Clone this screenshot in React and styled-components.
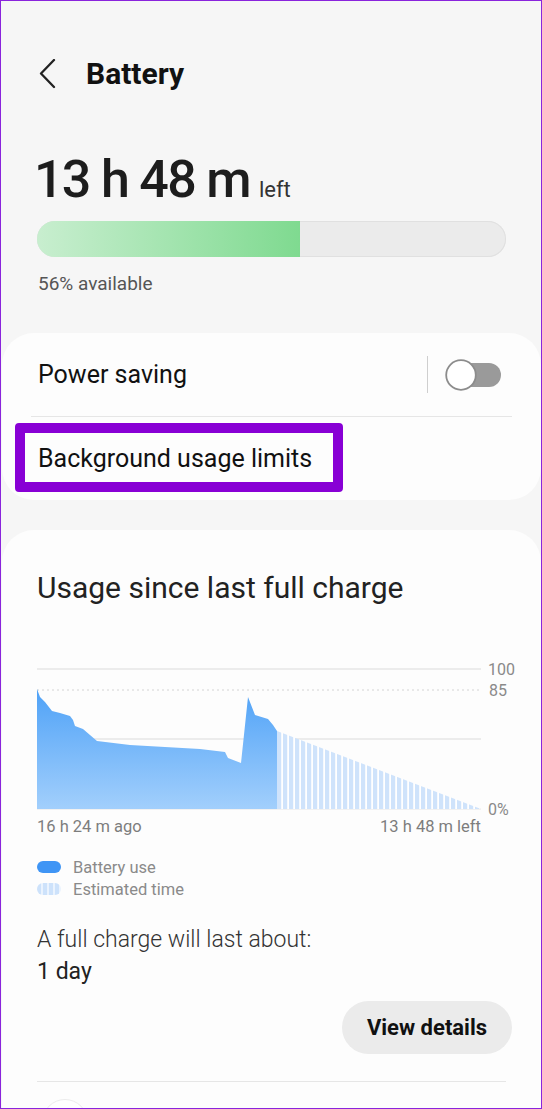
import React from 'react';
import styled, { createGlobalStyle } from 'styled-components';

const GlobalStyle = createGlobalStyle`
  html, body { margin: 0; padding: 0; background: #f6f6f6; }
  body { font-family: Roboto, "Noto Sans", Arial, sans-serif; color: #111; }
  * { box-sizing: border-box; }
`;

const Frame = styled.div`
  width: 542px;
  height: 1109px;
  overflow: hidden;
  border: 1px solid #8a24dc;
  background: #f6f6f6;
  padding-top: 55px;
`;

const Header = styled.header`
  height: 36px;
  padding-left: 36px;
  display: flex;
  align-items: center;
  gap: 27px;
`;

const Title = styled.h1`
  margin: 0;
  font-size: 30px;
  line-height: 36px;
  font-weight: 700;
  color: #111;
`;

const TimeRow = styled.div`
  margin-top: 62px;
  padding-left: 33px;
  display: flex;
  align-items: baseline;
`;

const BigTime = styled.span`
  font-size: 52px;
  line-height: 52px;
  font-weight: 500;
  letter-spacing: -1.7px;
  color: #1d1d1d;
`;

const LeftLabel = styled.span`
  margin-left: 9px;
  font-size: 22px;
  color: #333;
`;

const Bar = styled.div`
  margin: 15px 35px 0 36px;
  height: 36px;
  border-radius: 18px;
  background: #ebebeb;
  box-shadow: inset 0 0 0 1px #e0e0e0;
  overflow: hidden;
`;

const BarFill = styled.div`
  height: 100%;
  background: linear-gradient(90deg, #c8eecf 0%, #7fda90 100%);
`;

const Available = styled.div`
  margin-top: 15px;
  padding-left: 37px;
  font-size: 19px;
  line-height: 24px;
  color: #555;
`;

const Card = styled.section`
  margin: ${p => p.$top}px 0 0 1px;
  background: #fdfdfd;
  border-radius: ${p => (p.$open ? '32px 32px 0 0' : '32px')};
  ${p => p.$open && 'min-height: 620px;'}
  padding: ${p => p.$pad || '0'};
`;

const Row = styled.div`
  position: relative;
  height: 83px;
  padding: 0 39px 0 36px;
  display: flex;
  align-items: center;
  justify-content: space-between;
  font-size: 25px;
  line-height: 30px;
  color: #111;
`;

const Divider = styled.div`
  height: 1px;
  background: #e6e6e6;
  margin: ${p => p.$margin || '0 29px'};
`;

const SwitchGroup = styled.div`
  display: flex;
  align-items: center;
  gap: 17px;
`;

const VLine = styled.div`
  width: 1px;
  height: 37px;
  background: #cfcfcf;
`;

const Highlight = styled.div`
  position: absolute;
  left: 13px;
  top: 6px;
  width: 328px;
  height: 69px;
  border: 10px solid #8800d5;
  border-radius: 4px;
  pointer-events: none;
`;

const SectionTitle = styled.h2`
  margin: 0;
  font-size: 30px;
  line-height: 36px;
  font-weight: 400;
  color: #222;
`;

const ChartSvg = styled.svg`
  display: block;
  margin-top: 54px;
  overflow: visible;
`;

const AxisRow = styled.div`
  width: 444px;
  display: flex;
  justify-content: space-between;
  font-size: 16.5px;
  line-height: 20px;
  color: #7d7d7d;
`;

const Legend = styled.div`
  margin-top: 19px;
  display: flex;
  flex-direction: column;
`;

const LegendItem = styled.div`
  display: flex;
  align-items: center;
  gap: 12px;
  height: 22px;
  font-size: 16.5px;
  color: #8a8a8a;
`;

const Pill = styled.span`
  width: 24px;
  height: 12px;
  border-radius: 6px;
  background: ${p =>
    p.$striped
      ? 'repeating-linear-gradient(90deg, #cde2fb 0 4px, #eaf3fe 4px 6px)'
      : '#3f95f5'};
`;

const Summary = styled.div`
  margin-top: 25px;
  font-size: 23px;
  line-height: 30px;
  font-weight: 300;
  color: #333;
`;

const Days = styled.div`
  margin-top: 2px;
  font-size: 23px;
  line-height: 30px;
  color: #222;
`;

const ButtonRow = styled.div`
  margin-top: 14px;
  display: flex;
  justify-content: flex-end;
`;

const PillButton = styled.button`
  width: 170px;
  height: 53px;
  border: none;
  border-radius: 27px;
  background: #ebebeb;
  font-family: Roboto, "Noto Sans", Arial, sans-serif;
  font-size: 22px;
  font-weight: 700;
  color: #111;
`;

const RowIcon = styled.div`
  margin: 17px 0 0 5px;
  width: 46px;
  height: 46px;
  border-radius: 50%;
  background: #fff;
  border: 1.5px solid #ececec;
`;

const BackIcon = () => (
  <svg width="22" height="30" viewBox="0 0 22 30">
    <polyline points="17,1 4,14.5 17,28" fill="none" stroke="#222" strokeWidth="2.3" strokeLinecap="round" strokeLinejoin="round" />
  </svg>
);

const Switch = () => (
  <svg width="57" height="32" viewBox="0 0 57 32">
    <rect x="15" y="4" width="41" height="24" rx="12" fill="#9a9a9a" />
    <circle cx="16" cy="16" r="14.8" fill="#fff" stroke="#8c8c8c" strokeWidth="1.8" />
  </svg>
);

const usage = [
  [0, 29], [3, 37], [8, 42], [15, 51], [23, 53], [33, 56], [36, 60], [38, 66], [46, 69],
  [53, 75], [60, 81], [93, 85], [163, 89], [188, 92], [191, 98], [204, 103], [211, 37],
  [218, 55], [231, 59], [236, 65], [240, 71], [240, 149], [0, 149],
];

const Chart = () => (
  <ChartSvg width="474" height="157" viewBox="0 0 474 157">
    <defs>
      <linearGradient id="useFill" x1="0" y1="0" x2="0" y2="1">
        <stop offset="0" stopColor="#4fa2f7" />
        <stop offset="1" stopColor="#a2cffc" />
      </linearGradient>
      <pattern id="estFill" width="6" height="10" patternUnits="userSpaceOnUse">
        <rect width="6" height="10" fill="#ffffff" />
        <rect width="4.2" height="10" fill="#cfe3fb" />
      </pattern>
    </defs>
    <line x1="0" y1="9" x2="444" y2="9" stroke="#e6e6e6" strokeWidth="1.5" />
    <line x1="0" y1="30" x2="444" y2="30" stroke="#d4d4d4" strokeWidth="1" strokeDasharray="2 3" />
    <line x1="0" y1="79" x2="444" y2="79" stroke="#e6e6e6" strokeWidth="1.5" />
    <line x1="0" y1="149" x2="444" y2="149" stroke="#e6e6e6" strokeWidth="1" />
    <polygon points="240,71 444,149 240,149" fill="url(#estFill)" />
    <polygon points={usage.map(p => p.join(',')).join(' ')} fill="url(#useFill)" />
    <g fontFamily="Roboto, Arial, sans-serif" fontSize="16" fill="#8a8a8a" dominantBaseline="central">
      <text x="451" y="9">100</text>
      <text x="452" y="30">85</text>
      <text x="451" y="149">0%</text>
    </g>
  </ChartSvg>
);

export default function App() {
  return (
    <>
      <GlobalStyle />
      <Frame>
        <Header>
          <BackIcon />
          <Title>Battery</Title>
        </Header>

        <TimeRow>
          <BigTime>13 h 48 m</BigTime>
          <LeftLabel>left</LeftLabel>
        </TimeRow>
        <Bar>
          <BarFill style={{ width: '56%' }} />
        </Bar>
        <Available>56% available</Available>

        <Card $top={37}>
          <Row>
            <span>Power saving</span>
            <SwitchGroup>
              <VLine />
              <Switch />
            </SwitchGroup>
          </Row>
          <Divider />
          <Row>
            <span>Background usage limits</span>
            <Highlight />
          </Row>
        </Card>

        <Card $top={30} $open $pad="40px 29px 0 35px">
          <SectionTitle>Usage since last full charge</SectionTitle>
          <Chart />
          <AxisRow>
            <span>16 h 24 m ago</span>
            <span>13 h 48 m left</span>
          </AxisRow>
          <Legend>
            <LegendItem><Pill />Battery use</LegendItem>
            <LegendItem><Pill $striped />Estimated time</LegendItem>
          </Legend>
          <Summary>A full charge will last about:</Summary>
          <Days>1 day</Days>
          <ButtonRow>
            <PillButton>View details</PillButton>
          </ButtonRow>
          <Divider $margin="27px 6px 0 0" />
          <RowIcon />
        </Card>
      </Frame>
    </>
  );
}
